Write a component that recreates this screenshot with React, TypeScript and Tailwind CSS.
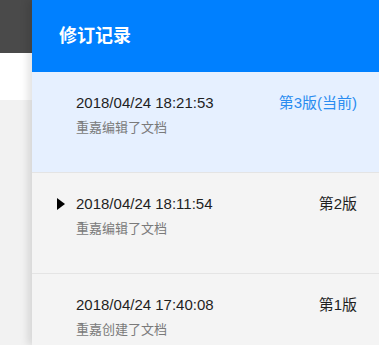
import React from "react";

type Version = {
  time: string;
  desc: string;
  label: string;
  current?: boolean;
  marked?: boolean;
};

const versions: Version[] = [
  { time: "2018/04/24 18:21:53", desc: "重嘉编辑了文档", label: "第3版(当前)", current: true },
  { time: "2018/04/24 18:11:54", desc: "重嘉编辑了文档", label: "第2版", marked: true },
  { time: "2018/04/24 17:40:08", desc: "重嘉创建了文档", label: "第1版" },
];

const App: React.FC = () => {
  return (
    <div
      className="flex h-[345px] w-[379px] overflow-hidden bg-[#f2f2f2]"
      style={{ fontFamily: '"Liberation Sans", "Noto Sans CJK SC", sans-serif' }}
    >
      {/* Page behind the drawer */}
      <div className="flex w-[32px] shrink-0 flex-col">
        <div className="h-[53px] bg-[#4a4a4a]" />
        <div className="h-[47px] bg-white" />
        <div className="flex-1 bg-[#f2f2f2]" />
      </div>

      {/* Revision drawer */}
      <div className="relative flex flex-1 flex-col bg-[#f4f4f4] shadow-[-4px_0_8px_rgba(0,0,0,0.12)]">
        <div className="flex h-[72px] shrink-0 items-center bg-[#0080ff] pl-[27px]">
          <h1 className="text-[18px] font-bold text-white">修订记录</h1>
        </div>

        {versions.map((v) => (
          <div
            key={v.time}
            className={`relative h-[101px] shrink-0 border-b border-[#e4e4e4] pl-[44px] pr-[22px] pt-[21px] ${
              v.current ? "bg-[#e6f0ff]" : "bg-[#f4f4f4]"
            }`}
          >
            {v.marked && (
              <span className="absolute left-[25px] top-[25px] h-0 w-0 border-y-[6px] border-l-[8px] border-y-transparent border-l-black" />
            )}
            <div className="flex items-center justify-between leading-[20px]">
              <span className="text-[15px] text-[#1f1f1f]">{v.time}</span>
              <span className={`text-[15px] ${v.current ? "text-[#2a8cf0]" : "text-[#1f1f1f]"}`}>
                {v.label}
              </span>
            </div>
            <div className="mt-[6px] text-[13px] leading-[18px] text-[#7a7a7a]">{v.desc}</div>
          </div>
        ))}
      </div>
    </div>
  );
};

export default App;
